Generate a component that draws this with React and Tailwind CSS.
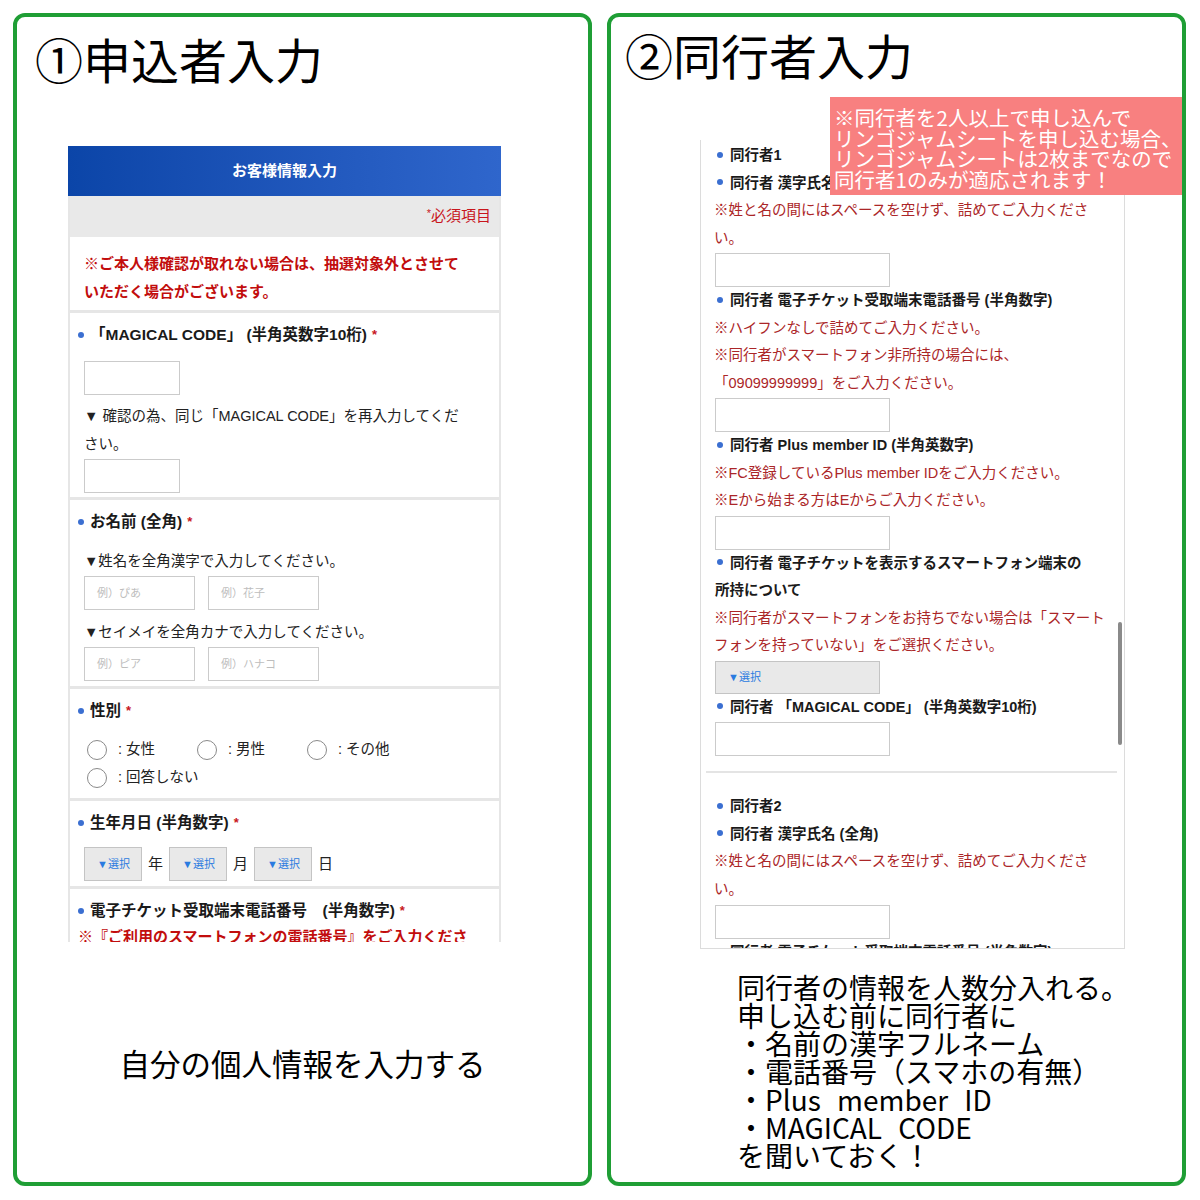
const formFont = "font-['Liberation_Sans','Noto_Sans_CJK_JP',sans-serif]"

function Dot({ className = '' }) {
  return <span className={`inline-block w-[6px] h-[6px] rounded-full bg-[#3b6fd1] shrink-0 ${className}`} />
}

function Req() {
  return <span className="text-[#c8161d] ml-[5px] text-[13px] font-bold">*</span>
}

function Section({ children, className = '' }) {
  return (
    <div className={`border-b-[3px] border-[#e6e6e6] pl-[14px] pr-[8px] pt-[10px] ${className}`}>
      {children}
    </div>
  )
}

function LeftLabel({ children, req = true }) {
  return (
    <div className="flex items-center -ml-[6px] h-[24px] leading-[24px] text-[15.5px] font-bold text-[#1a1a1a] whitespace-nowrap">
      <Dot className="mr-[6px]" />
      {children}
      {req && <Req />}
    </div>
  )
}

function Box({ w, children }) {
  return (
    <div
      className={`${w} h-[34px] border-[1.5px] border-[#cbcbcb] bg-white flex items-center pl-[12px] text-[11px] text-[#bdbdbd]`}
    >
      {children}
    </div>
  )
}

function SelectBox({ w = 'w-[58px]', h = 'h-[34px]' }) {
  return (
    <div className={`${w} ${h} bg-[#e9e9e9] border-[1.5px] border-[#c4c4c4] flex items-center pl-[12px] text-[11px] text-[#2b7be0]`}>
      ▼選択
    </div>
  )
}

function Radio({ label, w = 'w-[110px]' }) {
  return (
    <div className={`${w} flex items-center h-[28px]`}>
      <span className="ml-[3px] w-[20px] h-[20px] rounded-full border-[1.5px] border-[#8a8a8a] bg-white" />
      <span className="ml-[11px] text-[14.5px] text-[#222]">: {label}</span>
    </div>
  )
}

function LeftForm() {
  return (
    <div className={`ml-[51px] mt-[60px] w-[433px] h-[796px] overflow-hidden ${formFont}`}>
      <div className="h-[50px] bg-linear-to-r from-[#0b45a8] to-[#2f66cc] flex items-center justify-center text-white font-bold text-[15px]">
        お客様情報入力
      </div>
      <div className="border-x-2 border-[#e6e6e6]">
        <div className="h-[41px] bg-[#e9e9e9] flex items-center justify-end pr-[8px] text-[15px] text-[#c8161d]">
          <span className="text-[11px] -mt-[6px]">*</span>必須項目
        </div>

        <Section className="pt-[13px] pb-[4px]">
          <p className="text-[15px] font-bold leading-[28px] text-[#c20d0d] whitespace-nowrap">
            ※ご本人様確認が取れない場合は、抽選対象外とさせて
            <br />
            いただく場合がございます。
          </p>
        </Section>

        <Section className="pb-[4px]">
          <LeftLabel>「MAGICAL CODE」 (半角英数字10桁)</LeftLabel>
          <div className="mt-[14px]">
            <Box w="w-[96px]" />
          </div>
          <p className="mt-[7px] text-[14.5px] leading-[28px] text-[#222] whitespace-nowrap">
            ▼ 確認の為、同じ「MAGICAL CODE」を再入力してくだ
            <br />
            さい。
          </p>
          <div className="mt-[1px]">
            <Box w="w-[96px]" />
          </div>
        </Section>

        <Section className="pb-[5px]">
          <LeftLabel>お名前 (全角)</LeftLabel>
          <p className="mt-[13px] text-[14.5px] leading-[28px] text-[#222]">▼姓名を全角漢字で入力してください。</p>
          <div className="mt-[1px] flex gap-[13px]">
            <Box w="w-[111px]">例）ぴあ</Box>
            <Box w="w-[111px]">例）花子</Box>
          </div>
          <p className="mt-[8px] text-[14.5px] leading-[28px] text-[#222]">▼セイメイを全角カナで入力してください。</p>
          <div className="mt-[1px] flex gap-[13px]">
            <Box w="w-[111px]">例）ピア</Box>
            <Box w="w-[111px]">例）ハナコ</Box>
          </div>
        </Section>

        <Section className="pb-[6px]">
          <LeftLabel>性別</LeftLabel>
          <div className="mt-[13px] flex">
            <Radio label="女性" />
            <Radio label="男性" />
            <Radio label="その他" />
          </div>
          <div className="flex">
            <Radio label="回答しない" w="w-[200px]" />
          </div>
        </Section>

        <Section className="pb-[5px]">
          <LeftLabel>生年月日 (半角数字)</LeftLabel>
          <div className="mt-[12px] flex items-center text-[15px] text-[#222]">
            <SelectBox />
            <span className="mx-[6px]">年</span>
            <SelectBox />
            <span className="mx-[6px]">月</span>
            <SelectBox />
            <span className="mx-[6px]">日</span>
          </div>
        </Section>

        <Section>
          <LeftLabel>電子チケット受取端末電話番号　(半角数字)</LeftLabel>
          <p className="text-[15px] font-bold leading-[28px] text-[#c20d0d] whitespace-nowrap -ml-[6px]">
            ※『ご利用のスマートフォンの電話番号』をご入力くださ
          </p>
        </Section>
      </div>
    </div>
  )
}

function RLabel({ children }) {
  return (
    <div className="text-[14.5px] leading-[27.5px] font-bold text-[#1a1a1a] whitespace-nowrap">
      <Dot className="ml-[2px] mr-[7px] align-middle mb-[3px]" />
      {children}
    </div>
  )
}

function RNote({ children }) {
  return <p className="text-[14.5px] leading-[27.5px] text-[#ab2628] whitespace-nowrap -ml-[1px]">{children}</p>
}

function RInput({ className = 'mt-[1px]' }) {
  return <div className={`w-[175px] h-[34px] border-[1.5px] border-[#cbcbcb] bg-white ${className}`} />
}

function RightForm() {
  return (
    <div className={`relative ml-[89px] mt-[58px] w-[425px] h-[809px] overflow-hidden border border-t-0 border-[#dcdcdc] pl-[14px] pt-[2px] ${formFont}`}>
      <RLabel>同行者1</RLabel>
      <RLabel>同行者 漢字氏名 (全角)</RLabel>
      <RNote>※姓と名の間にはスペースを空けず、詰めてご入力くださ</RNote>
      <RNote>い。</RNote>
      <RInput />
      <RLabel>同行者 電子チケット受取端末電話番号 (半角数字)</RLabel>
      <RNote>※ハイフンなしで詰めてご入力ください。</RNote>
      <RNote>※同行者がスマートフォン非所持の場合には、</RNote>
      <RNote>「09099999999」をご入力ください。</RNote>
      <RInput />
      <RLabel>同行者 Plus member ID (半角英数字)</RLabel>
      <RNote>※FC登録しているPlus member IDをご入力ください。</RNote>
      <RNote>※Eから始まる方はEからご入力ください。</RNote>
      <RInput />
      <RLabel>
        同行者 電子チケットを表示するスマートフォン端末の
        <br />
        所持について
      </RLabel>
      <RNote>※同行者がスマートフォンをお持ちでない場合は「スマート</RNote>
      <RNote>フォンを持っていない」をご選択ください。</RNote>
      <div className="mt-[1px]">
        <SelectBox w="w-[165px]" h="h-[33px]" />
      </div>
      <RLabel>同行者 「MAGICAL CODE」 (半角英数字10桁)</RLabel>
      <RInput />
      <div className="-ml-[9px] mt-[15px] w-[411px] h-[2px] bg-[#e4e4e4]" />
      <div className="mt-[20px]">
        <RLabel>同行者2</RLabel>
      </div>
      <RLabel>同行者 漢字氏名 (全角)</RLabel>
      <RNote>※姓と名の間にはスペースを空けず、詰めてご入力くださ</RNote>
      <RNote>い。</RNote>
      <RInput className="mt-[2px]" />
      <RLabel>同行者 電子チケット受取端末電話番号 (半角数字)</RLabel>

      <div className="absolute right-[2px] top-[482px] w-[4px] h-[123px] rounded-full bg-[#8a8a8a]" />
    </div>
  )
}

export default function App() {
  const tips = [
    '同行者の情報を人数分入れる。',
    '申し込む前に同行者に',
    '・名前の漢字フルネーム',
    '・電話番号（スマホの有無）',
    '・Plus member ID',
    '・MAGICAL CODE',
    'を聞いておく！',
  ]

  return (
    <div className="w-[1200px] h-[1200px] bg-white p-[13px] flex gap-[15px] font-['Noto_Sans_CJK_JP',sans-serif] text-black">
      {/* left: applicant */}
      <div className="w-[579px] h-[1173px] border-4 border-[#1f9e35] rounded-[12px] flex flex-col">
        <h1 className="pl-[18px] mt-[13px] text-[48px] leading-[56px] font-normal">①申込者入力</h1>
        <LeftForm />
        <p className="mt-[101px] text-center text-[30.5px] leading-[40px]">自分の個人情報を入力する</p>
      </div>

      {/* right: companions */}
      <div className="relative w-[579px] h-[1173px] border-4 border-[#1f9e35] rounded-[12px] flex flex-col">
        <h1 className="pl-[14px] mt-[9px] text-[48px] leading-[56px] font-normal">②同行者入力</h1>
        <RightForm />
        <div className="pl-[126px] mt-[24px] text-[28px] leading-[28px] [word-spacing:10px]">
          {tips.map((t) => (
            <p key={t} className="whitespace-nowrap">
              {t}
            </p>
          ))}
        </div>

        <div className="absolute z-10 left-[219px] top-[80px] w-[352px] h-[98px] bg-[#f88080] pl-[4px] pt-[10px] text-white text-[20.5px] leading-[20.7px] whitespace-nowrap overflow-hidden">
          <p>※同行者を2人以上で申し込んで</p>
          <p>リンゴジャムシートを申し込む場合、</p>
          <p>リンゴジャムシートは2枚までなので</p>
          <p>同行者1のみが適応されます！</p>
        </div>
      </div>
    </div>
  )
}
